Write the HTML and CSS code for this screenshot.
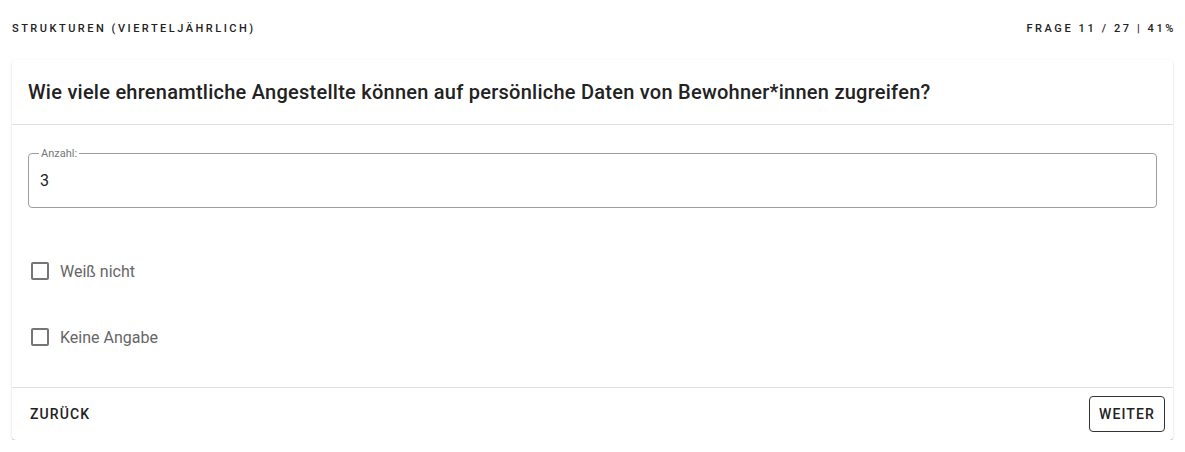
FILE: index.html
```html
<!DOCTYPE html>
<html lang="de">
<head>
    <meta charset="UTF-8">
    <meta name="viewport" content="width=device-width, initial-scale=1.0">
    <title>Strukturen (vierteljährlich)</title>
    <link rel="stylesheet" href="styles.css">
</head>
<body>
    <div class="topbar">
        <span class="overline">Strukturen (vierteljährlich)</span>
        <span class="overline">Frage 11 / 27 | 41%</span>
    </div>

    <div class="card">
        <div class="card-header">
            <h2>Wie viele ehrenamtliche Angestellte können auf persönliche Daten von Bewohner*innen zugreifen?</h2>
        </div>

        <div class="card-body">
            <fieldset class="field">
                <legend>Anzahl:</legend>
                <input type="text" value="3">
            </fieldset>

            <div class="options">
                <label class="option">
                    <span class="box"></span>
                    Weiß nicht
                </label>
                <label class="option">
                    <span class="box"></span>
                    Keine Angabe
                </label>
            </div>
        </div>

        <div class="card-footer">
            <button class="btn">Zurück</button>
            <button class="btn btn-outline">Weiter</button>
        </div>
    </div>
</body>
</html>
```

FILE: styles.css
```css
body {
    margin: 0;
    padding: 0 12px;
    font-family: Roboto, "Liberation Sans", sans-serif;
    background: #fff;
    color: #222;
}
.topbar {
    display: flex;
    justify-content: space-between;
    align-items: center;
    height: 56px;
}
.overline {
    font-size: 11px;
    font-weight: 500;
    letter-spacing: 2.5px;
    text-transform: uppercase;
    color: #222;
}
.overline:last-child {
    letter-spacing: 2.6px;
    margin-right: -3px;
}
.card {
    margin-top: 4px;
    background: #fff;
    border-radius: 4px;
    box-shadow: 0 2px 1px -1px rgba(0, 0, 0, 0.2), 0 1px 1px 0 rgba(0, 0, 0, 0.14), 0 1px 3px 0 rgba(0, 0, 0, 0.12);
}
.card-header {
    height: 64px;
    display: flex;
    align-items: center;
    padding: 0 16px;
    border-bottom: 1px solid #e0e0e0;
}
.card-header h2 {
    margin: 0;
    font-size: 20px;
    font-weight: 500;
    letter-spacing: 0.25px;
    color: #222;
}
.card-body {
    padding: 22px 16px 17px;
}
.field {
    margin: 0;
    padding: 0 10px;
    height: 61px;
    box-sizing: border-box;
    border: 1px solid #9e9e9e;
    border-radius: 4px;
}
.field legend {
    padding: 0 2px;
    font-size: 11px;
    color: #777;
}
.field input {
    border: none;
    outline: none;
    width: 100%;
    padding: 11px 1px 5px;
    font-family: inherit;
    font-size: 16px;
    color: #222;
    background: transparent;
}
.options {
    margin-top: 30px;
}
.option {
    display: flex;
    align-items: center;
    gap: 11px;
    height: 66px;
    padding-left: 3px;
    font-size: 16px;
    color: #666;
}
.box {
    width: 14px;
    height: 14px;
    border: 2px solid #757575;
    border-radius: 2px;
}
.card-footer {
    display: flex;
    justify-content: space-between;
    align-items: center;
    padding: 8px;
    border-top: 1px solid #e0e0e0;
}
.btn {
    height: 36px;
    padding: 0 9px;
    font-family: inherit;
    font-size: 14px;
    font-weight: 500;
    letter-spacing: 1.1px;
    text-transform: uppercase;
    color: #222;
    background: transparent;
    border: 1px solid transparent;
    border-radius: 4px;
}
.btn-outline {
    border-color: #333;
    width: 76px;
    padding: 0;
}
```
